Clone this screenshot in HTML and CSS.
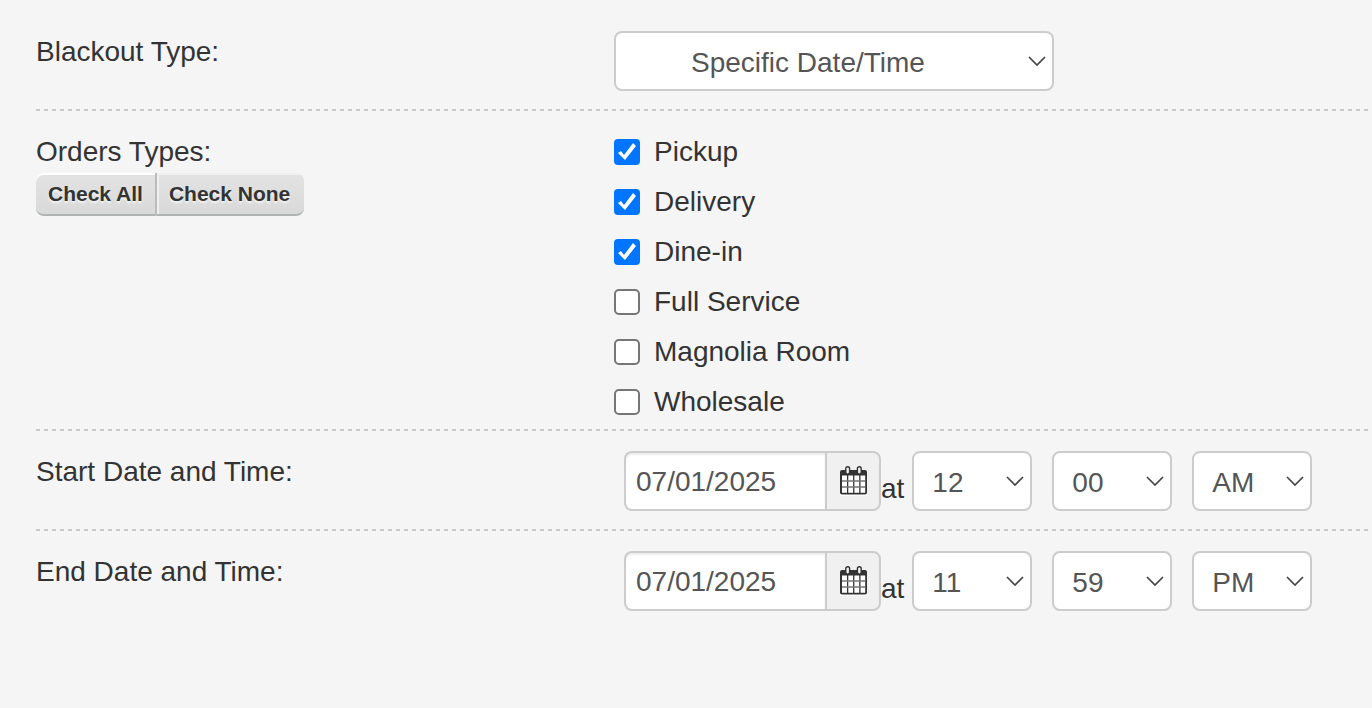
FILE: index.html
```html
<!DOCTYPE html>
<html lang="en">
<head>
    <meta charset="UTF-8">
    <meta name="viewport" content="width=device-width, initial-scale=1.0">
    <title>Blackout Dates</title>
    <link rel="stylesheet" href="styles.css">
</head>
<body>
<svg class="sprite" width="0" height="0" aria-hidden="true">
    <symbol id="chevron" viewBox="0 0 18 10">
        <path d="M1 1 L9 9 L17 1" fill="none" stroke="#444" stroke-width="1.7"/>
    </symbol>
    <symbol id="calendar" viewBox="0 0 27 30">
        <rect x="0" y="6" width="27" height="24" rx="2" fill="#fff"/>
        <rect x="0" y="4" width="27" height="24.5" rx="2" fill="#333"/>
        <path d="M2 9.5h5v17.2H2z M8.3 9.5h4.8v17.2H8.3z M14.4 9.5h4.8v17.2h-4.8z M20.5 9.5h4.7v17.2h-4.7z" fill="#fff"/>
        <path d="M2 15h23 M2 21h23" stroke="#777" stroke-width="1.5"/>
        <rect x="5.8" y="0.7" width="3.8" height="7.4" rx="1.8" fill="#f0f0f0" stroke="#333" stroke-width="1.4"/>
        <rect x="17.4" y="0.7" width="3.8" height="7.4" rx="1.8" fill="#f0f0f0" stroke="#333" stroke-width="1.4"/>
    </symbol>
</svg>
<form class="blackout-form">
    <div class="row">
        <label class="row-label" for="type">Blackout Type:</label>
        <div class="row-field">
            <span class="select select-wide">
                <select id="type">
                    <option>Specific Date/Time</option>
                    <option>Recurring</option>
                </select>
                <svg><use href="#chevron"/></svg>
            </span>
        </div>
    </div>
    <div class="row row-list">
        <div class="row-label">
            Orders Types:
            <div class="btn-group">
                <button type="button" id="checkAll">Check All</button>
                <button type="button" id="checkNone">Check None</button>
            </div>
        </div>
        <div class="row-field checks">
            <label><input type="checkbox" checked>Pickup</label>
            <label><input type="checkbox" checked>Delivery</label>
            <label><input type="checkbox" checked>Dine-in</label>
            <label><input type="checkbox">Full Service</label>
            <label><input type="checkbox">Magnolia Room</label>
            <label><input type="checkbox">Wholesale</label>
        </div>
    </div>
    <div class="row">
        <label class="row-label" for="startDate">Start Date and Time:</label>
        <div class="row-field datetime">
            <div class="date">
                <input type="text" id="startDate" value="07/01/2025">
                <button type="button" aria-label="Pick start date"><svg><use href="#calendar"/></svg></button>
            </div>
            <span class="at">at</span>
            <span class="select">
                <select aria-label="Start hour"><option>12</option></select>
                <svg><use href="#chevron"/></svg>
            </span>
            <span class="select">
                <select aria-label="Start minute"><option>00</option></select>
                <svg><use href="#chevron"/></svg>
            </span>
            <span class="select">
                <select aria-label="Start AM or PM"><option>AM</option><option>PM</option></select>
                <svg><use href="#chevron"/></svg>
            </span>
        </div>
    </div>
    <div class="row">
        <label class="row-label" for="endDate">End Date and Time:</label>
        <div class="row-field datetime">
            <div class="date">
                <input type="text" id="endDate" value="07/01/2025">
                <button type="button" aria-label="Pick end date"><svg><use href="#calendar"/></svg></button>
            </div>
            <span class="at">at</span>
            <span class="select">
                <select aria-label="End hour"><option>11</option></select>
                <svg><use href="#chevron"/></svg>
            </span>
            <span class="select">
                <select aria-label="End minute"><option>59</option></select>
                <svg><use href="#chevron"/></svg>
            </span>
            <span class="select">
                <select aria-label="End AM or PM"><option>PM</option><option>AM</option></select>
                <svg><use href="#chevron"/></svg>
            </span>
        </div>
    </div>
</form>
<script>
    function setAll(value) {
        document.querySelectorAll('.checks input').forEach(box => {
            box.checked = value;
        });
    }
    document.getElementById('checkAll').addEventListener('click', () => setAll(true));
    document.getElementById('checkNone').addEventListener('click', () => setAll(false));
</script>
</body>
</html>
```
FILE: styles.css
```css
* {
    box-sizing: border-box;
}
body {
    margin: 0;
    background-color: #f5f5f5;
    color: #333;
    font-family: "Liberation Sans", Arial, sans-serif;
    font-size: 28px;
    line-height: 42px;
}
input, select, button {
    margin: 0;
    font-family: inherit;
    font-size: 28px;
}
.sprite {
    position: absolute;
}
.blackout-form {
    padding: 11px 0 0 36px;
}
.row {
    display: flex;
    padding: 20px 0;
    background: repeating-linear-gradient(to right, #c8c8c8 0, #c8c8c8 4px, transparent 4px, transparent 8px) left bottom / 100% 2px no-repeat;
}
.row-list {
    padding-bottom: 8px;
}
.row:last-child {
    background: none;
}
.row-label {
    flex: 0 0 578px;
}
.row-field {
    flex: 1;
}

/* drop-downs */
.select {
    position: relative;
    display: block;
    width: 120px;
    height: 60px;
}
.select-wide {
    width: 440px;
}
.select select {
    appearance: none;
    width: 100%;
    height: 100%;
    padding: 2px 18px 0;
    border: 2px solid #ccc;
    border-radius: 8px;
    background-color: #fff;
    color: #555;
}
.select-wide select {
    padding-left: 75px;
}
.select svg {
    position: absolute;
    right: 8px;
    top: 25px;
    width: 18px;
    height: 10px;
    pointer-events: none;
}

/* check all / none */
.btn-group {
    display: flex;
}
.btn-group button {
    height: 43px;
    padding: 0 12px;
    border: none;
    border-bottom: 2px solid #b0b4b4;
    background: linear-gradient(#e3e3e3, #d9d9d9);
    box-shadow: inset 0 2px 0 #fff;
    color: #333;
    font-size: 21px;
    font-weight: bold;
    text-shadow: 0 2px 2px #f5f5f5;
}
.btn-group button:first-child {
    border-right: 2px solid #bbb;
    border-radius: 8px 0 0 8px;
}
.btn-group button:last-child {
    padding-right: 14px;
    border-radius: 0 8px 8px 0;
    box-shadow: inset 2px 2px 0 #f0f0f0;
}

/* order types */
.checks {
    display: flex;
    flex-direction: column;
    align-items: flex-start;
    gap: 8px;
}
.checks label {
    display: flex;
    align-items: center;
    gap: 14px;
}
.checks input {
    appearance: none;
    width: 26px;
    height: 26px;
    border: 2px solid #767676;
    border-radius: 5px;
    background-color: #fff;
}
.checks input:checked {
    border: none;
    border-radius: 4px;
    background-color: #0075ff;
}
.checks input:checked::before {
    content: "";
    display: block;
    width: 26px;
    height: 26px;
    background-color: #fff;
    clip-path: polygon(4px 14px, 7px 12px, 10px 16px, 19px 4px, 22px 7px, 11px 21px);
}

/* date and time */
.datetime {
    display: flex;
    align-items: flex-end;
    padding-left: 10px;
}
.datetime .select + .select {
    margin-left: 20px;
}
.date {
    display: flex;
    width: 257px;
    height: 60px;
}
.date input {
    flex: 1;
    min-width: 0;
    padding: 2px 10px 0;
    border: 2px solid #ccc;
    border-right: none;
    border-radius: 8px 0 0 8px;
    background-color: #fff;
    box-shadow: inset 0 2px 2px #eee;
    color: #555;
}
.date button {
    display: flex;
    align-items: center;
    justify-content: center;
    width: 56px;
    padding: 0;
    border: 2px solid #ccc;
    border-radius: 0 8px 8px 0;
    background-color: #f0f0f0;
}
.date svg {
    width: 27px;
    height: 30px;
}
.at {
    margin-right: 8px;
    line-height: 44px;
}
```
